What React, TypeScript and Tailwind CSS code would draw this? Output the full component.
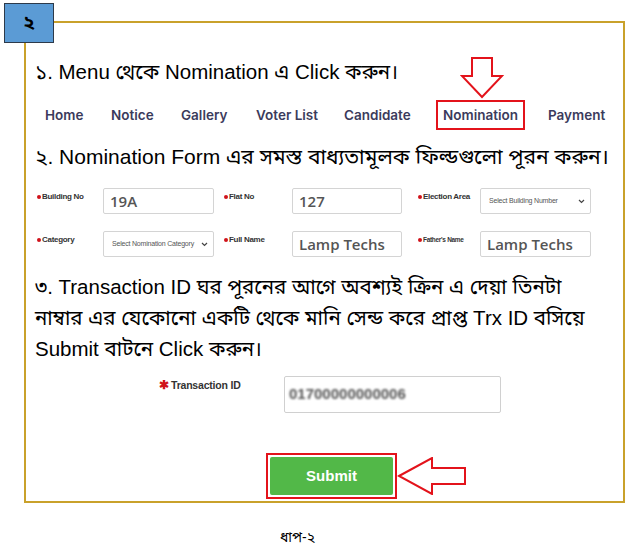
import React from "react";

const bn = "font-['Liberation_Sans','Noto_Sans_Bengali','Lohit_Bengali','Noto_Sans',sans-serif]";
const narrow = "font-['Liberation_Sans_Narrow','Liberation_Sans',sans-serif]";

function DownArrow() {
  return (
    <svg width="44" height="42" viewBox="0 0 44 42" className="absolute left-[22px] top-[-45px]">
      <path d="M12 1 H32 V19 H42 L22 40 L2 19 H12 Z" fill="white" stroke="#e3131b" strokeWidth="2" />
    </svg>
  );
}

function LeftArrow() {
  return (
    <svg width="70" height="38" viewBox="0 0 70 38">
      <path d="M2 19 L35 1 V11 H68 V27 H35 V37 Z" fill="white" stroke="#e3131b" strokeWidth="2" />
    </svg>
  );
}

function Label({ text, w, size = "text-[8px]" }: { text: string; w: string; size?: string }) {
  return (
    <div className={`${w} flex items-start pt-[4px] shrink-0 whitespace-nowrap`}>
      <span className="mt-[3px] mr-[1px] w-[4px] h-[4px] rounded-full bg-[#d0121b] shrink-0" />
      <span className={`${narrow} font-bold ${size} leading-[10px] tracking-[-0.3px] text-[#333]`}>{text}</span>
    </div>
  );
}

function TextInput({ value, w }: { value: string; w: string }) {
  return (
    <div className={`${w} h-[26px] border border-[#d4d4d4] rounded-[2px] flex items-center px-[6px] shrink-0`}>
      <span className="font-['Open_Sans',sans-serif] font-semibold text-[15px] text-[#555]">{value}</span>
    </div>
  );
}

function SelectBox({ value, w }: { value: string; w: string }) {
  return (
    <div className={`${w} h-[26px] border border-[#d4d4d4] rounded-[2px] flex items-center justify-between pl-[8px] pr-[5px] shrink-0 whitespace-nowrap`}>
      <span className={`${narrow} text-[7px] tracking-[-0.2px] text-[#555]`}>{value}</span>
      <svg width="7" height="5" viewBox="0 0 7 5">
        <path d="M1 1 L3.5 3.5 L6 1" fill="none" stroke="#444" strokeWidth="1.2" />
      </svg>
    </div>
  );
}

export default function App() {
  const menu = [
    { label: "Home", w: "w-[66px]" },
    { label: "Notice", w: "w-[70px]" },
    { label: "Gallery", w: "w-[75px]" },
    { label: "Voter List", w: "w-[88px]" },
    { label: "Candidate", w: "w-[92px]" },
  ];

  return (
    <div className="w-[629px] h-[550px] bg-white relative overflow-hidden">
      {/* step badge */}
      <div className="absolute left-[4px] top-[3px] w-[50px] h-[40px] bg-[#5b9bd5] border border-[#2d3a4a] flex items-center justify-center z-10">
        <span className={`${bn} text-[19px] font-bold text-black`}>২</span>
      </div>

      {/* frame */}
      <div className="ml-[24px] mt-[21px] w-[601px] h-[482px] border-2 border-[#c9a12b] flex flex-col">
        <div className={`${bn} mt-[35px] pl-[9px] h-[28px] leading-[28px] text-[20.5px] text-black whitespace-nowrap`}>
          ১. Menu থেকে Nomination এ Click করুন।
        </div>

        {/* menu row */}
        <div className="mt-[14px] h-[30px] pl-[19px] flex items-center font-['Inter',sans-serif] font-semibold text-[13.5px] text-[#3b3b5c]">
          {menu.map((m) => (
            <span key={m.label} className={m.w}>{m.label}</span>
          ))}
          <div className="relative w-[89px] h-[30px] border-2 border-[#e3131b] flex items-center justify-center">
            <DownArrow />
            Nomination
          </div>
          <span className="ml-[23px]">Payment</span>
        </div>

        <div className={`${bn} mt-[13px] pl-[9px] h-[28px] leading-[28px] text-[21px] text-black whitespace-nowrap`}>
          ২. Nomination Form এর সমস্ত বাধ্যতামূলক ফিল্ডগুলো পূরন করুন।
        </div>

        {/* form */}
        <div className="mt-[17px] pl-[11px] flex">
          <Label text="Building No" w="w-[66px]" />
          <TextInput value="19A" w="w-[111px]" />
          <div className="w-[10px]" />
          <Label text="Flat No" w="w-[68px]" />
          <TextInput value="127" w="w-[110px]" />
          <div className="w-[16px]" />
          <Label text="Election Area" w="w-[62px]" />
          <SelectBox value="Select Building Number" w="w-[111px]" />
        </div>
        <div className="mt-[17px] pl-[11px] flex">
          <Label text="Category" w="w-[66px]" />
          <SelectBox value="Select Nomination Category" w="w-[111px]" />
          <div className="w-[10px]" />
          <Label text="Full Name" w="w-[68px]" />
          <TextInput value="Lamp Techs" w="w-[110px]" />
          <div className="w-[16px]" />
          <Label text="Father's Name" w="w-[62px]" size="text-[6.5px]" />
          <TextInput value="Lamp Techs" w="w-[111px]" />
        </div>

        <div className={`${bn} mt-[14px] pl-[9px] leading-[31px] text-[20.5px] text-black whitespace-nowrap`}>
          ৩. Transaction ID ঘর পূরনের আগে অবশ্যই ক্রিন এ দেয়া তিনটা
          <br />
          নাম্বার এর যেকোনো একটি থেকে মানি সেন্ড করে প্রাপ্ত Trx ID বসিয়ে
          <br />
          Submit বাটনে Click করুন।
        </div>

        {/* transaction id */}
        <div className="mt-[12px] pl-[133px] flex">
          <div className="w-[125px] pt-[3px] flex items-start whitespace-nowrap">
            <span className="text-[#d0121b] text-[12px] leading-[12px] font-bold mr-[2px]">✱</span>
            <span className={`${narrow} font-bold text-[10.5px] leading-[12px] tracking-[-0.2px] text-[#333]`}>Transaction ID</span>
          </div>
          <div className="w-[217px] h-[37px] border border-[#d0d0d0] rounded-[2px] flex items-center px-[4px]">
            <span className="font-['Liberation_Sans',sans-serif] font-bold text-[15px] text-[#555] blur-[1px]">01700000000006</span>
          </div>
        </div>

        {/* submit */}
        <div className="mt-[40px] pl-[240px] flex items-center">
          <div className="w-[131px] h-[46px] border-2 border-[#e3131b] p-[2px]">
            <div className="w-full h-full bg-[#52b848] rounded-[2px] flex items-center justify-center font-['Liberation_Sans',sans-serif] font-bold text-[15px] text-white">
              Submit
            </div>
          </div>
          <LeftArrow />
        </div>
      </div>

      <div className={`${bn} mt-[24px] pl-[280px] text-[14px] leading-[20px] text-black`}>ধাপ-২</div>
    </div>
  );
}
